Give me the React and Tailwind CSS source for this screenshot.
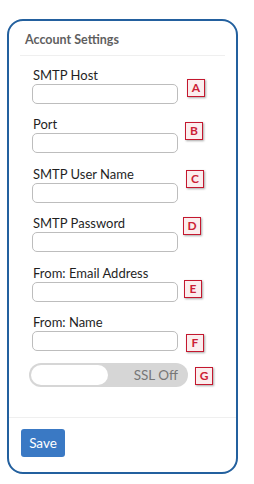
import React from "react";

const fields = [
  { label: "SMTP Host", mark: "A", pos: "left-[155px] top-[12px]" },
  { label: "Port", mark: "B", pos: "left-[153px] top-[6px]" },
  { label: "SMTP User Name", mark: "C", pos: "left-[154px] top-[4px]" },
  { label: "SMTP Password", mark: "D", pos: "left-[151px] top-[2px]" },
  { label: "From: Email Address", mark: "E", pos: "left-[152px] top-[15px]" },
  { label: "From: Name", mark: "F", pos: "left-[154px] top-[20px]" },
];

const Mark = ({ letter, className }) => (
  <div
    className={`absolute w-[18px] h-[18px] flex items-center justify-center border-[1.5px] border-[#c4182f] bg-[#fbeeee] text-[#cc1f36] text-[12px] font-bold leading-none shadow-[1px_1px_2px_rgba(0,0,0,0.35)] ${className}`}
  >
    {letter}
  </div>
);

const App = () => {
  return (
    <div className="w-[254px] h-[484px] bg-white pt-[19px] pl-[7px] font-['Lato',sans-serif]">
      <div className="w-[231px] h-[455px] border-2 border-[#23609e] rounded-[16px] flex flex-col">
        {/* header */}
        <div className="mx-[11px] pt-[11px] pb-[7px] border-b border-[#efefef]">
          <h2 className="pl-[5px] text-[12.5px] leading-[16px] font-bold text-[#5f5f5f]">Account Settings</h2>
        </div>

        {/* fields */}
        <div className="pt-[11px] pl-[23px] pb-[30px] border-b border-[#efefef] flex flex-col gap-[12.4px]">
          {fields.map((f) => (
            <div key={f.mark} className="relative flex flex-col">
              <label className="pl-[1px] text-[13px] leading-[16px] text-[#1f1f1f] mb-[1px]">{f.label}</label>
              <div className="w-[146px] h-[20px] border border-[#bdbdbd] rounded-[5px] bg-white"></div>
              <Mark letter={f.mark} className={f.pos} />
            </div>
          ))}

          <div className="relative -ml-[3px] mt-[-0.4px]">
            <div className="w-[159px] h-[24px] rounded-full bg-[#d6d6d6] p-[2px] flex items-center">
              <div className="w-[77px] h-[20px] rounded-full bg-white"></div>
              <span className="ml-auto pr-[8px] text-[13.5px] text-[#777]">SSL Off</span>
            </div>
            <Mark letter="G" className="left-[166px] top-[4px]" />
          </div>
        </div>

        {/* footer */}
        <div className="pt-[11px] pl-[12px]">
          <button className="w-[44px] h-[28px] rounded-[3px] bg-[#3a79c4] text-white text-[13.5px]">Save</button>
        </div>
      </div>
    </div>
  );
};

export default App;
